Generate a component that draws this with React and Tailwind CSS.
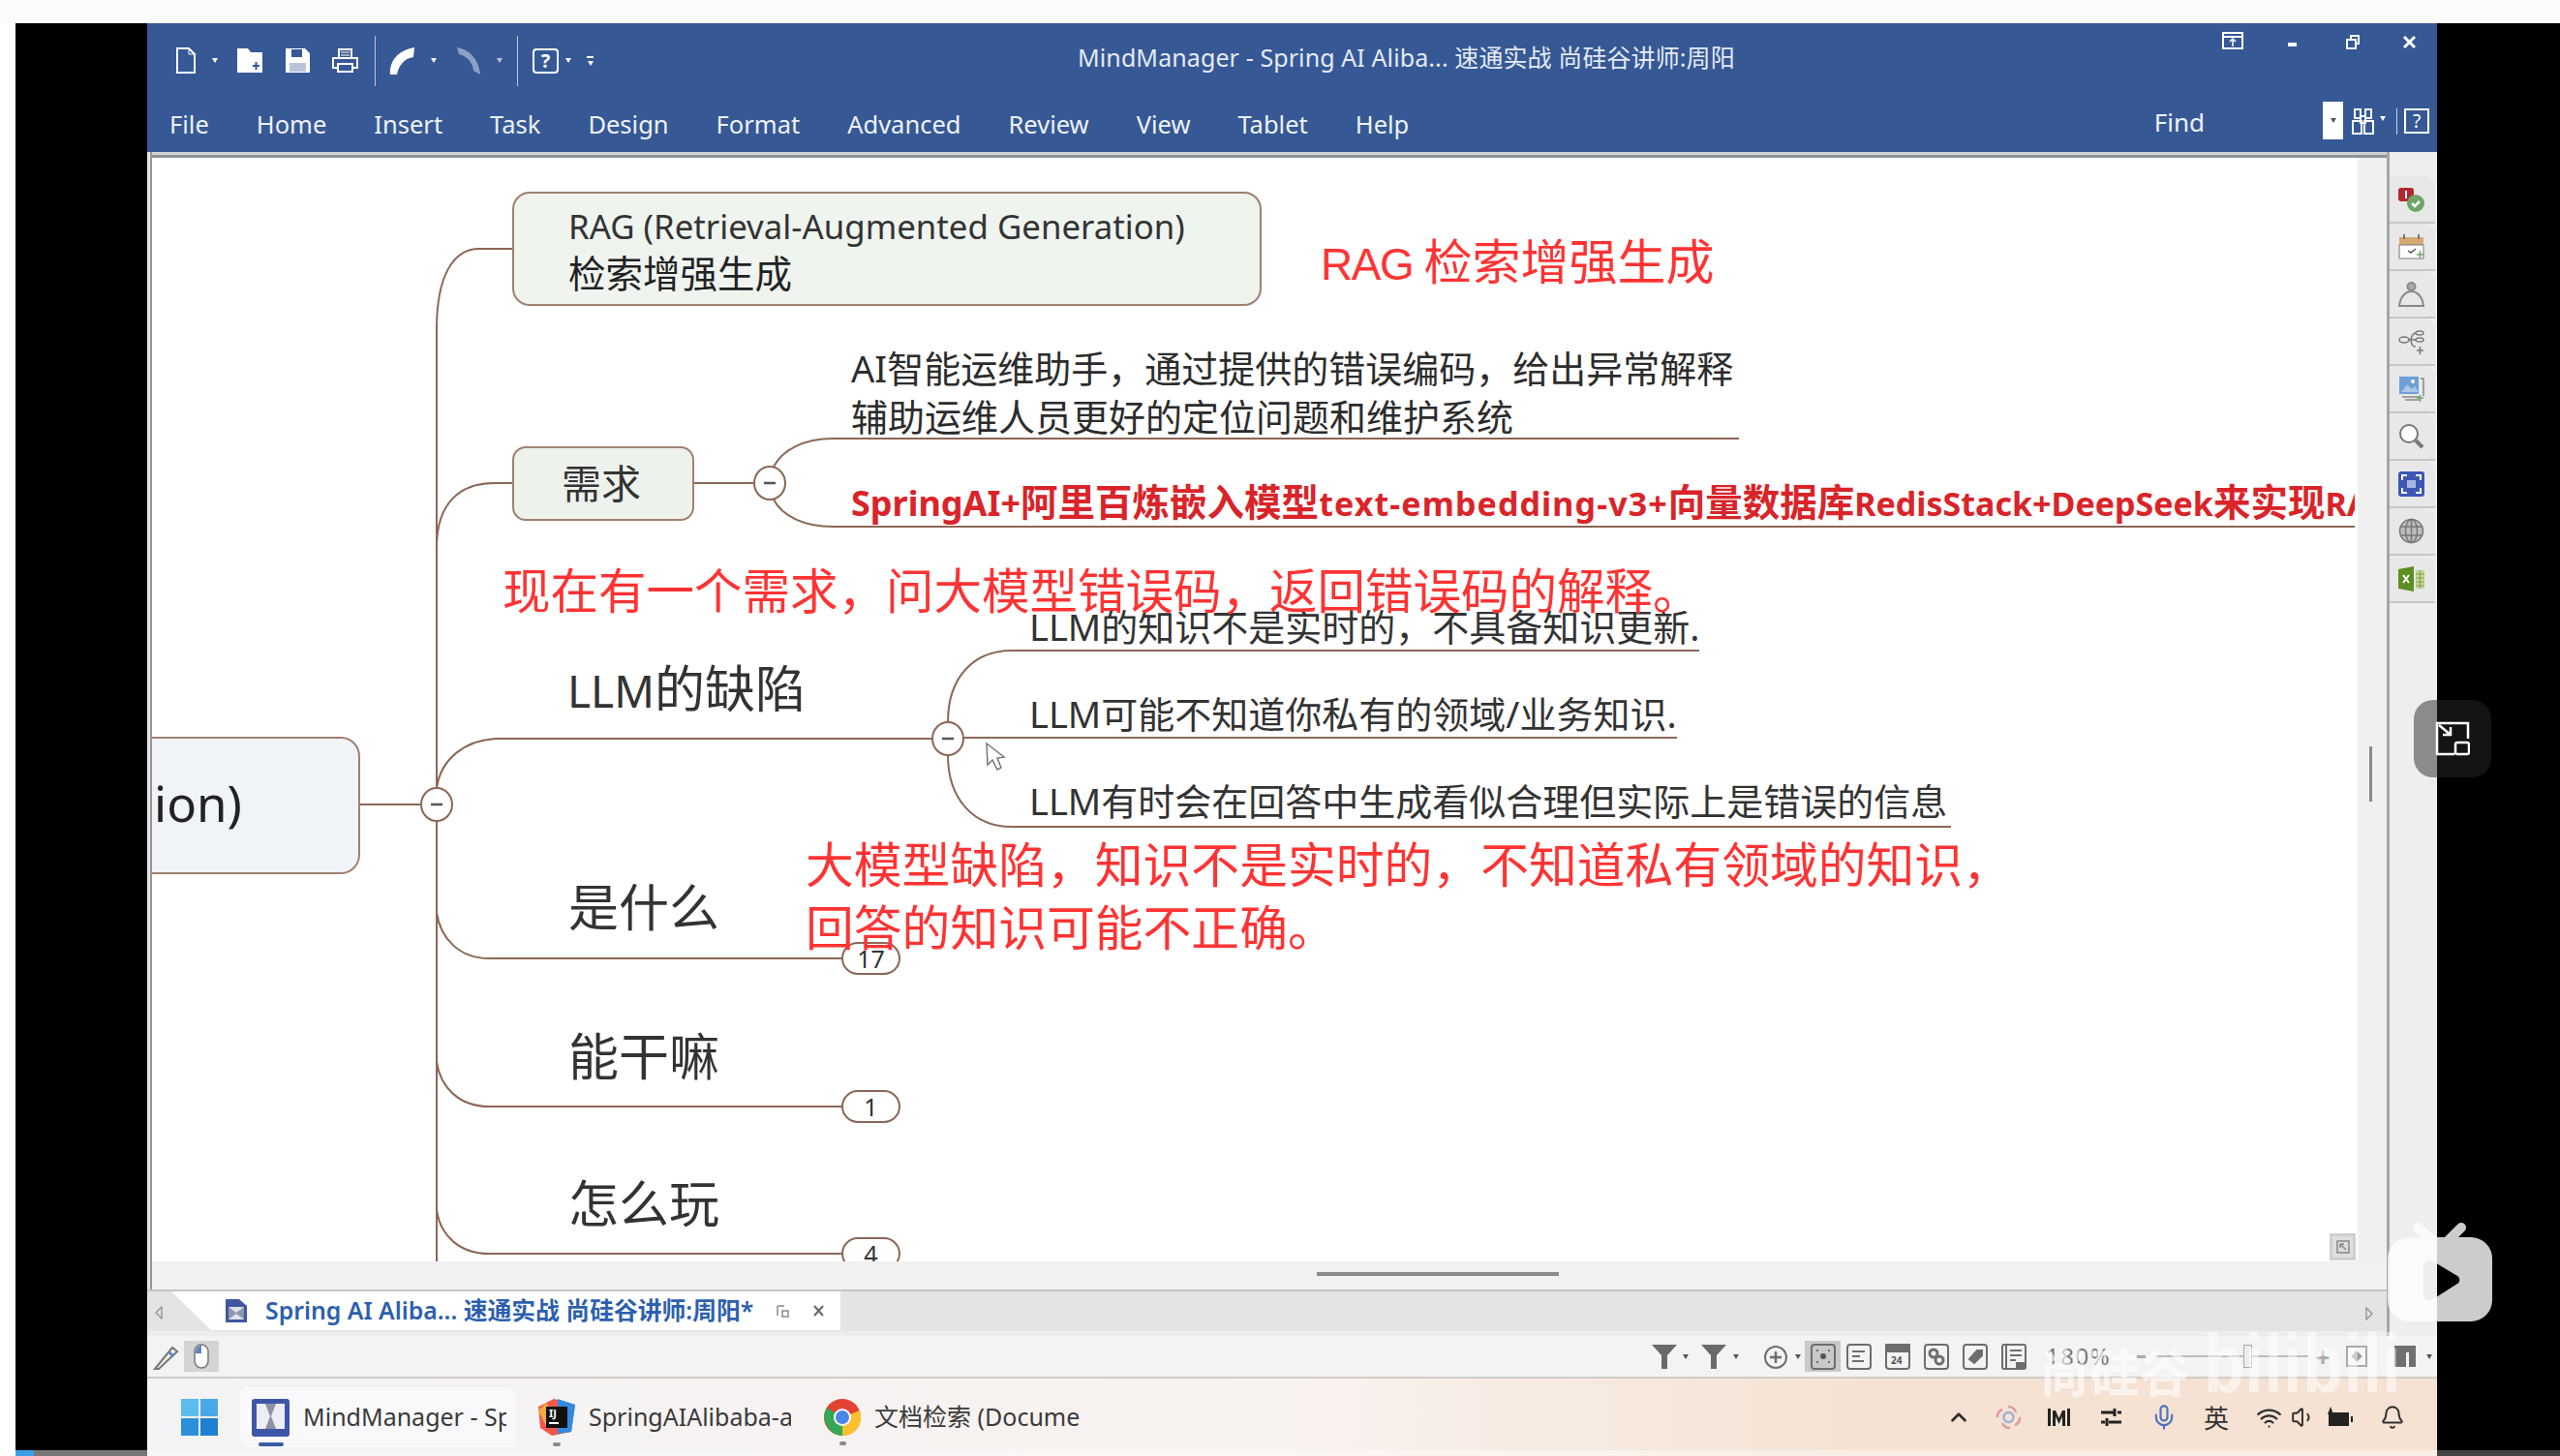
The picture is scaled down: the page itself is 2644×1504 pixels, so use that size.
import React from "react";
import { ChevronUp, Mic, Wifi, Bell, Volume1 } from "lucide-react";

const Caret = ({ className = "", color = "white" }) => (
  <svg className={"w-[6px] h-[5px] shrink-0 " + className} viewBox="0 0 6 5"><path d="M0 0h6L3 5z" fill={color} /></svg>
);

const Tab = ({ children }) => (
  <div className="w-[47px] h-[49px] bg-[#e8e8e8] border-b-2 border-[#c6c6c6] flex items-center justify-center pr-[2px] [clip-path:polygon(0_0,82%_0,100%_14%,100%_100%,0_100%)]">
    {children}
  </div>
);

const SIcon = ({ children, className = "" }) => (
  <svg className={"w-[26px] h-[27px] shrink-0 " + className} viewBox="0 0 26 27" fill="none" stroke="#6e6e6e" strokeWidth="2">{children}</svg>
);

function Title() {
  return (
    <div className="h-[66px] flex items-start relative">
      <div className="flex items-center pl-[29px] pt-[17px] h-[60px]">
        <svg className="w-[22px] h-[27px]" viewBox="0 0 22 27" fill="none" stroke="white" strokeWidth="2"><path d="M2 1h12l6 6v19H2z" /><path d="M14 1v6h6" strokeWidth="1" /></svg>
        <Caret className="ml-[16px]" />
        <svg className="w-[28px] h-[27px] ml-[19px]" viewBox="0 0 28 27"><path d="M1 1h11l3 4h12v21H1z" fill="white" /><path d="M17 19h7M20.500 15v8" stroke="#365895" strokeWidth="2" /></svg>
        <svg className="w-[27px] h-[27px] ml-[22px]" viewBox="0 0 27 27"><path d="M1 1h20l5 5v20H1z" fill="white" /><path d="M7 2h11v8H7z" fill="#365895" /><path d="M5 16h17v9H5z" fill="#365895" opacity=".35" /></svg>
        <svg className="w-[29px] h-[27px] ml-[21px]" viewBox="0 0 29 27" fill="none" stroke="white" strokeWidth="2"><path d="M8 10V2h13v8" /><path d="M2 11h25v10H2z" /><path d="M7 17h15v8H7z" fill="#365895" /><path d="M10 5h9M10 8h9" strokeWidth="1" /></svg>
        <div className="w-px h-[52px] bg-[#b8c5dc] ml-[16px]" />
        <svg className="w-[27px] h-[30px] ml-[14px]" viewBox="0 0 27 30"><path d="M1 29C0 15 9 4 26 1L25 11C16 12 10 19 8 29z" fill="white" /></svg>
        <Caret className="ml-[16px]" />
        <svg className="w-[26px] h-[30px] ml-[20px]" viewBox="0 0 26 30"><path d="M1 1C14 3 24 14 25 29L18 25C17 17 12 10 3 8z" fill="#8ca0c6" /></svg>
        <Caret className="ml-[16px]" color="#b8c5dc" />
        <div className="w-px h-[52px] bg-[#b8c5dc] ml-[15px]" />
        <div className="w-[27px] h-[26px] ml-[15px] rounded-[4px] border-2 border-white text-white text-[20px] leading-[22px] font-bold text-center">?</div>
        <Caret className="ml-[7px]" />
        <div className="ml-[16px] flex flex-col items-center gap-[3px]">
          <div className="w-[7px] h-[2px] bg-white" />
          <Caret />
        </div>
      </div>
      <div className="absolute left-[961px] top-0 h-[70px] leading-[70px] text-[25px] text-[#e4eaf4] whitespace-nowrap tracking-[0.1px]">
        MindManager - Spring AI Aliba... 速通实战 尚硅谷讲师:周阳
      </div>
      <div className="ml-auto flex items-start">
        <svg className="w-[22px] h-[18px] mt-[9px]" viewBox="0 0 22 18" fill="none" stroke="white" strokeWidth="2"><path d="M1 1h20v16H1zM1 5h20" /><path d="M11 15V8M8 10l3-3 3 3" strokeWidth="1.500" /></svg>
        <div className="w-[9px] h-[4px] bg-white mt-[20px] ml-[46px]" />
        <svg className="w-[14px] h-[15px] mt-[12px] ml-[51px]" viewBox="0 0 14 15" fill="none" stroke="white" strokeWidth="2"><path d="M5 4V1h8v8h-3" /><path d="M1 5h9v9H1z" /></svg>
        <svg className="w-[13px] h-[13px] mt-[13px] ml-[45px] mr-[22px]" viewBox="0 0 13 13" stroke="white" strokeWidth="3"><path d="M1 1l11 11M12 1L1 12" /></svg>
      </div>
    </div>
  );
}

function Menu() {
  return (
    <div className="h-[67px] flex items-start text-white">
      <div className="flex gap-[49px] pl-[23px] pt-[19px] text-[25.500px] leading-[38px] text-[#eef2f8]">
        <span>File</span><span>Home</span><span>Insert</span><span>Task</span><span>Design</span><span>Format</span><span>Advanced</span><span>Review</span><span>View</span><span>Tablet</span><span>Help</span>
      </div>
      <div className="ml-auto flex items-start">
        <span className="text-[26px] leading-[38px] mt-[17px] text-[#eef2f8]">Find</span>
        <div className="w-[21px] h-[39px] bg-white mt-[15px] ml-[122px] flex items-center justify-center"><Caret color="#555" /></div>
        <svg className="w-[27px] h-[27px] mt-[22px] ml-[7px]" viewBox="0 0 27 27" fill="none" stroke="white" strokeWidth="2"><path d="M5 1h6v9H5zM16 1h6v9h-6zM3 13h9v13H3zM15 13h9v13h-9zM11 8h5v7h-5z" /></svg>
        <Caret className="mt-[30px] ml-[4px]" />
        <div className="w-px h-[27px] bg-[#c8d3e6] mt-[22px] ml-[11px]" />
        <div className="w-[26px] h-[26px] border-2 border-white mt-[22px] ml-[7px] mr-[8px] text-center text-[19px] leading-[22px] text-white">?</div>
      </div>
    </div>
  );
}

function MindMap() {
  return (
    <div className="relative flex-1 bg-white overflow-hidden">
      <svg className="absolute left-0 top-0 w-[2278px] h-[1140px]" viewBox="157 163 2278 1140" fill="none" stroke="#8c6656" strokeWidth="2">
        <path d="M529 257H495C468 257 451 285 451 340V1303" />
        <path d="M529 499H510C475 499 451 520 451 565" />
        <path d="M371 831H434" />
        <path d="M451 814C455 785 480 763 515 763H962" />
        <path d="M451 943C455 970 475 990 505 990H869" />
        <path d="M451 1097C455 1124 475 1143 505 1143H869" />
        <path d="M451 1250C455 1277 475 1295 505 1295H869" />
        <path d="M717 499H778" />
        <path d="M799 482C808 465 830 453 860 453H1796" />
        <path d="M799 516C808 533 830 544 860 544H2432" />
        <path d="M979 746C979 700 1005 672 1045 672H1755" />
        <path d="M996 762H1732" />
        <path d="M979 780C979 825 1005 854 1045 854H2015" />
        <ellipse cx="451" cy="831" rx="16" ry="17" fill="white" />
        <ellipse cx="795" cy="499" rx="16" ry="17" fill="white" />
        <ellipse cx="979" cy="763" rx="16" ry="17" fill="white" />
        <path d="M445 831H457M789 499H801M973 763H985" stroke="#555" strokeWidth="2.500" />
        <path d="M1019 768L1020 790L1025 785L1030 795L1034 793L1030 783L1037 782Z" fill="white" stroke="#777" strokeWidth="1.500" />
      </svg>

      <div className="absolute left-[372px] top-[35px] w-[774px] h-[118px] bg-[#eff4ef] border-2 border-[#a08070] rounded-[18px] pl-[56px] pt-[10px] text-[34.800px] leading-[48px] text-[#333]">
        <div className="whitespace-nowrap">RAG (Retrieval-Augmented Generation)</div>
        <div className="text-[38.500px] text-[#222]">检索增强生成</div>
      </div>

      <div className="absolute left-[372px] top-[298px] w-[188px] h-[77px] bg-[#edf3ec] border-2 border-[#a08070] rounded-[14px] flex items-center justify-center text-[41px] text-[#333] pr-[4px]">需求</div>

      <div className="absolute left-0 top-[598px] w-[215px] h-[142px] bg-[#f0f3f8] border-2 border-l-0 border-[#a08070] rounded-r-[20px] flex items-center pl-[2px] pb-[5px] text-[51px] text-[#222]">ion)</div>

      <div className="absolute left-[722px] top-[192px] text-[38px] leading-[50px] text-[#2c2c2c] whitespace-nowrap">
        <div>AI智能运维助手，通过提供的错误编码，给出异常解释</div>
        <div>辅助运维人员更好的定位问题和维护系统</div>
      </div>
      <div className="absolute left-[722px] top-[330px] w-[1553px] overflow-hidden text-[34px] leading-[50px] font-bold text-[#d92429] whitespace-nowrap">
        <span className="text-[36px]">SpringAI+</span><span className="text-[38.500px]">阿里百炼嵌入模型</span><span className="tracking-[1.100px]">text-embedding-v3+</span><span className="text-[38.500px]">向量数据库</span>RedisStack+DeepSeek<span className="text-[38.500px]">来实现</span>RAG
      </div>

      <div className="absolute left-[429px] top-[518px] text-[52px] leading-[60px] text-[#333] whitespace-nowrap"><span className="text-[46px]">LLM</span>的缺陷</div>
      <div className="absolute left-[906px] top-[459px] text-[38px] leading-[50px] text-[#333] whitespace-nowrap">LLM的知识不是实时的，不具备知识更新.</div>
      <div className="absolute left-[906px] top-[549px] text-[38px] leading-[50px] text-[#333] whitespace-nowrap">LLM可能不知道你私有的领域/业务知识.</div>
      <div className="absolute left-[906px] top-[639px] text-[38px] leading-[50px] text-[#333] whitespace-nowrap">LLM有时会在回答中生成看似合理但实际上是错误的信息</div>

      <div className="absolute left-[430px] top-[744px] text-[52px] leading-[60px] text-[#333]">是什么</div>
      <div className="absolute left-[430px] top-[898px] text-[52px] leading-[60px] text-[#333]">能干嘛</div>
      <div className="absolute left-[430px] top-[1050px] text-[52px] leading-[60px] text-[#333]">怎么玩</div>

      <div className="absolute left-[712px] top-[810px] w-[61px] h-[34px] bg-white border-2 border-[#8c6656] rounded-full text-center text-[25px] leading-[30px] text-[#333]">17</div>
      <div className="absolute left-[712px] top-[963px] w-[61px] h-[34px] bg-white border-2 border-[#8c6656] rounded-full text-center text-[25px] leading-[30px] text-[#333]">1</div>
      <div className="absolute left-[712px] top-[1115px] w-[61px] h-[34px] bg-white border-2 border-[#8c6656] rounded-full text-center text-[25px] leading-[30px] text-[#333]">4</div>

      <div className="absolute left-[1207px] top-[79px] font-['Liberation_Sans','Noto_Sans_CJK_SC',sans-serif] text-[50px] leading-[60px] text-[#ff3333] whitespace-nowrap"><span className="text-[46px] tracking-[-1.500px]">RAG </span>检索增强生成</div>
      <div className="absolute left-[362px] top-[419px] font-['Liberation_Sans','Noto_Sans_CJK_SC',sans-serif] text-[49.500px] leading-[60px] text-[#ff3333] whitespace-nowrap">现在有一个需求，问大模型错误码，返回错误码的解释。</div>
      <div className="absolute left-[675px] top-[700px] font-['Liberation_Sans','Noto_Sans_CJK_SC',sans-serif] text-[49.800px] leading-[65px] text-[#ff3333] whitespace-nowrap">
        <div>大模型缺陷，知识不是实时的，不知道私有领域的知识，</div>
        <div>回答的知识可能不正确。</div>
      </div>

      <div className="absolute left-[2249px] top-[1111px] w-[27px] h-[28px] bg-[#dedede] border-[3px] border-[#cfcfcf] flex items-center justify-center">
        <svg className="w-[14px] h-[14px]" viewBox="0 0 14 14" fill="none" stroke="#888" strokeWidth="1.500"><path d="M1 1h12v12H1zM4 4l6 6M4 4h4M4 4v4" /></svg>
      </div>
    </div>
  );
}

function RightPanel() {
  return (
    <div className="w-[52px] shrink-0 bg-[#eeeeee] border-l-[3px] border-[#a6a6a6] pt-[25px] flex flex-col">
      <Tab>
        <svg className="w-[27px] h-[26px]" viewBox="0 0 27 26"><rect x="0" y="1" width="16" height="14" rx="3" fill="#b3282d" /><path d="M7 4h2v8H7z" fill="white" /><circle cx="18" cy="17" r="9" fill="#6fa566" /><path d="M14 17l3 3 5-5" stroke="white" strokeWidth="2.500" fill="none" /></svg>
      </Tab>
      <Tab>
        <svg className="w-[27px] h-[27px]" viewBox="0 0 27 27"><path d="M1 4h25v8H1z" fill="#d7a873" /><path d="M1 12h25v14H1z" fill="white" stroke="#777" /><path d="M6 1v5M21 1v5" stroke="#777" strokeWidth="2" /><path d="M10 18l3 2 5-4" stroke="#555" strokeWidth="1.500" fill="none" /><path d="M19 22h7M22.500 18v8" stroke="#6fa566" strokeWidth="1.500" /></svg>
      </Tab>
      <Tab>
        <svg className="w-[27px] h-[27px]" viewBox="0 0 27 27" fill="none" stroke="#888" strokeWidth="2"><circle cx="13.500" cy="6" r="4" fill="#aaa" /><path d="M1 26C2 16 8 11 13.500 11S25 16 26 26z" /></svg>
      </Tab>
      <Tab>
        <svg className="w-[27px] h-[27px]" viewBox="0 0 27 27" fill="none" stroke="#777" strokeWidth="1.500"><ellipse cx="6" cy="12" rx="5" ry="3" /><path d="M11 12h4M13 12C14 7 15 5 18 5M14 12h4M13 13C14 18 15 19 18 19" /><ellipse cx="22" cy="5" rx="4" ry="2" /><ellipse cx="22" cy="12" rx="4" ry="2" /><path d="M19 23h7M22.500 19v8" /></svg>
      </Tab>
      <Tab>
        <svg className="w-[27px] h-[27px]" viewBox="0 0 27 27"><path d="M1 1h20v18H1z" fill="#6e9fd6" /><path d="M3 17l6-8 5 5 3-3 4 6z" fill="#a9c7e6" /><circle cx="15" cy="6" r="2" fill="white" /><path d="M23 3h3v18M4 22h19M7 25h15" stroke="#888" strokeWidth="1.500" fill="none" /><path d="M19 23h7M22.500 20v7" stroke="#6fa566" strokeWidth="1.500" /></svg>
      </Tab>
      <Tab>
        <svg className="w-[27px] h-[27px]" viewBox="0 0 27 27" fill="none" stroke="#777"><circle cx="11" cy="11" r="9" fill="white" strokeWidth="2" /><path d="M18 18l7 7" strokeWidth="4" /></svg>
      </Tab>
      <Tab>
        <svg className="w-[27px] h-[26px]" viewBox="0 0 27 26"><rect width="27" height="26" rx="3" fill="#3f56b5" /><path d="M4 9V4h5M18 4h5v5M23 17v5h-5M9 22H4v-5" stroke="white" strokeWidth="2" fill="none" /><path d="M9 9h9v8H9z" fill="#a8b6e4" /></svg>
      </Tab>
      <Tab>
        <svg className="w-[27px] h-[27px]" viewBox="0 0 27 27" fill="#bdbdbd" stroke="#777" strokeWidth="1.500"><circle cx="13.500" cy="13.500" r="12" /><ellipse cx="13.500" cy="13.500" rx="6" ry="12" fill="none" /><path d="M13.500 1v25M2 9h23M2 18h23" fill="none" /></svg>
      </Tab>
      <Tab>
        <svg className="w-[27px] h-[26px]" viewBox="0 0 27 26"><path d="M0 3l16-3v26L0 23z" fill="#5c8e22" /><path d="M5 9l6 8M11 9l-6 8" stroke="white" strokeWidth="2" /><path d="M18 4h9v19h-9z" fill="#c6d69c" /><path d="M18 8h9M18 12h9M18 16h9M18 20h9M22.500 4v19" stroke="#7fa23d" strokeWidth="1" /></svg>
      </Tab>
    </div>
  );
}

function TabBar() {
  return (
    <div className="h-[48px] bg-[#e4e4e4] border-t-2 border-b-[5px] border-t-[#c4c4c4] border-b-[#ececec] flex items-start relative shrink-0">
      <svg className="w-[8px] h-[14px] ml-[8px] mt-[15px]" viewBox="0 0 8 14" fill="none" stroke="#999" strokeWidth="1.500"><path d="M7 1L1 7l6 6z" /></svg>
      <div className="ml-[9px] w-[691px] h-[40px] bg-white [clip-path:polygon(0_0,100%_0,100%_100%,41px_100%)] flex items-center pl-[55px]">
        <svg className="w-[24px] h-[26px] shrink-0" viewBox="0 0 24 26"><path d="M1 1h14l8 7v17H1z" fill="#3f56a0" /><path d="M4 9h16v13H4z" fill="#dfe3ec" /><path d="M4 9l8 6 8-6v13l-8-6-8 6z" fill="#8e97ad" /></svg>
        <span className="ml-[18px] text-[24.800px] font-semibold text-[#2d5fae] whitespace-nowrap">Spring AI Aliba... 速通实战 尚硅谷讲师:周阳*</span>
        <svg className="w-[13px] h-[13px] ml-[24px] shrink-0" viewBox="0 0 13 13" fill="none" stroke="#888" strokeWidth="1.500"><path d="M1 1h7M1 1v10M6 6h6v6H6z" /></svg>
        <svg className="w-[11px] h-[12px] ml-[25px] shrink-0" viewBox="0 0 11 12" stroke="#666" strokeWidth="2"><path d="M1 1l9 10M10 1L1 11" /></svg>
      </div>
      <svg className="absolute right-[14px] top-[16px] w-[8px] h-[14px]" viewBox="0 0 8 14" fill="none" stroke="#999" strokeWidth="1.500"><path d="M1 1l6 6-6 6z" /></svg>
    </div>
  );
}

function StatusBar() {
  return (
    <div className="h-[44px] bg-[#f3f3f3] border-b-2 border-[#d0ccc8] flex items-center shrink-0">
      <svg className="w-[28px] h-[30px] ml-[6px]" viewBox="0 0 28 30" fill="none" stroke="#777" strokeWidth="2"><path d="M2 28L20 6l5 4L6 28z" /><path d="M16 10l5 5" stroke="#5f84c0" strokeWidth="3" /></svg>
      <div className="w-[36px] h-[32px] bg-[#d4d4d4] ml-[4px] flex items-center justify-center">
        <svg className="w-[16px] h-[26px]" viewBox="0 0 16 26"><rect x="1" y="1" width="14" height="24" rx="7" fill="white" stroke="#777" strokeWidth="1.500" /><path d="M2 8a6 6 0 0 1 6-6v8H2z" fill="#5f84c0" /></svg>
      </div>
      <div className="ml-auto flex items-center">
        <svg className="w-[26px] h-[25px]" viewBox="0 0 26 25"><path d="M0 0h26L16 11v14h-6V11z" fill="#6a6a6a" /></svg>
        <Caret className="ml-[6px]" color="#555" />
        <svg className="w-[26px] h-[25px] ml-[13px]" viewBox="0 0 26 25"><path d="M0 0h26L16 11v14h-6V11z" fill="#6a6a6a" /><path d="M22 8l-6 8h4l-3 8 7-10h-4z" fill="#f3f3f3" /></svg>
        <Caret className="ml-[7px]" color="#555" />
        <SIcon className="ml-[25px]"><circle cx="13" cy="14" r="11" /><path d="M13 8v12M7 14h12" strokeWidth="2.500" /></SIcon>
        <Caret className="ml-[7px]" color="#555" />
        <div className="w-[37px] h-[32px] bg-[#c9c9c9] ml-[4px] flex items-center justify-center">
          <SIcon><rect x="1" y="1" width="24" height="25" rx="3" /><circle cx="13" cy="13" r="3" fill="#555" stroke="none" /><path d="M6 7h2M18 7h2M6 19h2M18 19h2" /></SIcon>
        </div>
        <SIcon className="ml-[6px]"><rect x="1" y="1" width="24" height="25" rx="3" /><path d="M6 8h13M6 13h8M6 18h12" /></SIcon>
        <SIcon className="ml-[14px]"><rect x="1" y="1" width="24" height="25" rx="3" /><path d="M1 1h24v7H1z" fill="#6e6e6e" /><text x="6" y="21" fontSize="10" fill="#555" stroke="none" fontWeight="700">24</text></SIcon>
        <SIcon className="ml-[14px]"><rect x="1" y="1" width="24" height="25" rx="3" /><circle cx="10" cy="10" r="4" strokeWidth="3" /><circle cx="16" cy="17" r="4" strokeWidth="3" /></SIcon>
        <SIcon className="ml-[14px]"><rect x="1" y="1" width="24" height="25" rx="3" /><path d="M7 16l8-9 5 0 0 5-8 8z" fill="#6e6e6e" /></SIcon>
        <SIcon className="ml-[14px]"><rect x="1" y="1" width="24" height="25" rx="2" /><path d="M5 1v25M9 7h12M9 12h12M9 17h6" /><path d="M16 20h8v5h-8z" fill="#6e6e6e" /></SIcon>
        <span className="ml-[20px] text-[24px] text-[#777] w-[64px] tracking-[1.500px]">180%</span>
        <div className="ml-[30px] w-[9px] h-[3px] bg-[#aaa]" />
        <div className="relative ml-[10px] w-[158px] h-[2px] bg-[#bbb] flex items-center">
          <div className="absolute left-[91px] w-[9px] h-[24px] bg-[#eee] border border-[#aaa]" />
        </div>
        <div className="ml-[7px] text-[28px] leading-[28px] text-[#aaa] font-bold w-[20px]">+</div>
        <div className="ml-[12px] w-[22px] h-[22px] border-2 border-[#aaa] bg-[#f6f6f6] flex items-center justify-center">
          <div className="w-[8px] h-[8px] bg-[#999] rotate-45" />
        </div>
        <svg className="w-[22px] h-[22px] ml-[28px]" viewBox="0 0 22 22"><path d="M0 0h22v22H15V7h-3v15H0z" fill="#707070" /></svg>
        <Caret className="ml-[11px] mr-[5px]" color="#555" />
      </div>
    </div>
  );
}

function Taskbar() {
  return (
    <div className="h-[80px] shrink-0 bg-gradient-to-r from-[#f4f3f5] via-[#f8f2ef] via-50% to-[#f5e2d2] to-75% flex items-center relative font-['Noto_Sans','Noto_Sans_CJK_SC',sans-serif]">
      <svg className="w-[38px] h-[38px] ml-[35px]" viewBox="0 0 38 38"><path d="M0 0h18v18H0z" fill="#5cbcf0" /><path d="M20 0h18v18H20z" fill="#4aa8e8" /><path d="M0 20h18v18H0z" fill="#2b8fdc" /><path d="M20 20h18v18H20z" fill="#1f7fd0" /></svg>
      <div className="ml-[23px] w-[285px] h-[62px] bg-[#f9f9fb] rounded-[8px] flex items-center relative">
        <svg className="w-[39px] h-[39px] ml-[12px]" viewBox="0 0 39 39"><rect width="39" height="39" rx="3" fill="#3f56a8" /><path d="M5 5h29v26H5z" fill="#eceef3" /><path d="M14 5h11l-5 13 5 13H14l5-13z" fill="#8d93a5" /></svg>
        <span className="ml-[14px] w-[210px] overflow-hidden whitespace-nowrap text-[25px] text-[#3a3a3a]">MindManager - Spring</span>
        <div className="absolute left-[19px] bottom-[1px] w-[26px] h-[4px] rounded-full bg-[#3b5ba5]" />
      </div>
      <div className="ml-[23px] relative">
        <svg className="w-[38px] h-[38px]" viewBox="0 0 38 38"><path d="M0 8L16 0l22 6-4 28-20 4L2 30z" fill="#f2574a" /><path d="M20 0l18 6-4 28-14 2z" fill="#2f8be0" /><path d="M0 12l8-8 8 10-8 14z" fill="#f3a83a" /><path d="M8 8h22v22H8z" fill="#111" /></svg>
        <span className="absolute left-[11px] top-[9px] text-[11px] leading-[12px] font-bold text-white">IJ</span>
        <div className="absolute left-[11px] top-[24px] w-[10px] h-[2px] bg-white" />
        <div className="absolute left-[15px] top-[45px] w-[8px] h-[4px] rounded-full bg-[#888]" />
      </div>
      <span className="ml-[14px] w-[209px] overflow-hidden whitespace-nowrap text-[25px] text-[#3a3a3a]">SpringAIAlibaba-ai</span>
      <div className="ml-[34px] relative">
        <svg className="w-[38px] h-[40px]" viewBox="0 0 38 38"><circle cx="19" cy="19" r="19" fill="#e34133" /><path d="M19 19L3 28A19 19 0 0 0 19 38z" fill="#35a853" /><path d="M19 19v19A19 19 0 0 0 37 12z" fill="#fbc02d" /><path d="M19 19L3 28A19 19 0 0 1 3 9z" fill="#35a853" /><circle cx="19" cy="19" r="9" fill="white" /><circle cx="19" cy="19" r="7" fill="#4a86e8" /></svg>
        <div className="absolute left-[16px] top-[45px] w-[7px] h-[4px] rounded-full bg-[#888]" />
      </div>
      <span className="ml-[14px] text-[25px] text-[#3a3a3a] whitespace-nowrap w-[212px] overflow-hidden">文档检索 (Docume</span>
      <div className="ml-auto flex items-center text-[#2f2f2f]">
        <ChevronUp className="w-[26px] h-[26px]" strokeWidth={2.500} />
        <svg className="w-[27px] h-[26px] ml-[25px]" viewBox="0 0 27 26" fill="none" stroke="#e29aa4" strokeWidth="2.500"><circle cx="13.500" cy="13" r="5" stroke="#9fb1d8" /><path d="M13 2a8 8 0 0 1 8 6M25 13a8 8 0 0 1-5 8M15 24a8 8 0 0 1-8-5M2 13a8 8 0 0 1 5-8" /></svg>
        <svg className="w-[23px] h-[18px] ml-[27px]" viewBox="0 0 23 18"><path d="M0 0h3v18H0zM20 0h3v18h-3zM5 2h3l3.500 8L15 2h3v16h-3V8l-3.500 8L8 8v10H5z" fill="#222" /></svg>
        <svg className="w-[21px] h-[20px] ml-[32px]" viewBox="0 0 21 20" fill="none" stroke="#222" strokeWidth="3"><path d="M0 5h13M17 5h4M0 15h4M8 15h13" /><path d="M14 1v8M6 11v8" strokeWidth="3" /></svg>
        <Mic className="w-[28px] h-[28px] ml-[30px] text-[#4e6fc0]" strokeWidth={1.800} />
        <span className="ml-[27px] text-[26px] leading-[30px] text-[#333] font-['Noto_Sans_CJK_SC',sans-serif]">英</span>
        <Wifi className="w-[27px] h-[27px] ml-[28px]" strokeWidth={2} />
        <Volume1 className="w-[26px] h-[26px] ml-[9px]" strokeWidth={1.800} />
        <svg className="w-[27px] h-[22px] ml-[11px]" viewBox="0 0 27 22"><path d="M2 6h21v14H2z" fill="#222" /><path d="M25 10h2v6h-2z" fill="#222" /><path d="M4 0l3 8H1z" fill="#222" /></svg>
        <Bell className="w-[26px] h-[26px] ml-[28px] mr-[33px]" strokeWidth={1.800} />
      </div>
    </div>
  );
}

export default function App() {
  return (
    <div className="w-[2644px] h-[1504px] flex flex-col bg-white overflow-hidden relative font-['Noto_Sans','Noto_Sans_CJK_SC',sans-serif]">
      <div className="h-[24px] bg-[#fbfbfb] shrink-0" />
      <div className="flex-1 flex min-h-0">
        <div className="w-[16px] bg-white shrink-0" />
        <div className="w-[136px] bg-black shrink-0" />
        <div className="w-[2365px] shrink-0 flex flex-col">
          <div className="bg-[#365895] shrink-0">
            <Title />
            <Menu />
          </div>
          <div className="flex-1 flex min-h-0">
            <div className="flex-1 flex flex-col min-w-0">
              <div className="flex-1 flex min-h-0">
                <div className="w-[5px] bg-[#e6e6e6] border-r-2 border-[#969696] shrink-0" />
                <div className="flex-1 flex flex-col min-w-0">
                  <div className="h-[6px] bg-[#cfd2d4] border-b-[3px] border-[#8f9396] shrink-0" />
                  <div className="flex-1 flex min-h-0">
                    <MindMap />
                    <div className="w-[30px] bg-[#f0f0f0] shrink-0 pt-[608px] pl-[12px]">
                      <div className="w-[3px] h-[57px] bg-[#8a8a8a]" />
                    </div>
                  </div>
                  <div className="h-[29px] bg-[#f1f1f1] pt-[11px] pl-[1203px] shrink-0">
                    <div className="w-[250px] h-[4px] bg-[#8a8a8a]" />
                  </div>
                </div>
              </div>
              <TabBar />
            </div>
            <RightPanel />
          </div>
          <StatusBar />
          <Taskbar />
        </div>
        <div className="flex-1 bg-black" />
      </div>

      <div className="absolute left-[2106px] top-[1388px] text-[52px] leading-[60px] font-bold text-white/60 whitespace-nowrap">尚硅谷</div>
      <div className="absolute left-[2276px] top-[1368px] font-['Liberation_Sans',sans-serif] text-[68px] leading-[80px] font-bold tracking-[1px] text-white/50 whitespace-nowrap scale-y-[1.25]">bilibili</div>

      <div className="absolute left-[2493px] top-[723px] w-[80px] h-[80px] rounded-[20px] bg-[#272727]/50 flex items-center justify-center">
        <svg className="w-[36px] h-[36px]" viewBox="0 0 36 36" fill="none" stroke="white" strokeWidth="2.500"><path d="M2 14V2h32v16M2 14v20h18" /><rect x="21" y="22" width="14" height="12" rx="2" /><path d="M4 4l12 10M16 6v8H8" /></svg>
      </div>

      <svg className="absolute left-[2460px] top-[1258px] w-[120px] h-[112px]" viewBox="0 0 120 112">
        <defs>
          <mask id="tvHole">
            <rect width="120" height="112" fill="white" />
            <path d="M43 51C43 45 48 42 53 45L78 60C81 62 81 66 78 68L53 84C48 87 43 84 43 78Z" fill="black" />
          </mask>
        </defs>
        <g opacity=".8" mask="url(#tvHole)">
          <path d="M37 10L53 24M82 10L68 24" stroke="white" strokeWidth="10" strokeLinecap="round" />
          <rect x="6" y="20" width="108" height="87" rx="22" fill="white" />
        </g>
      </svg>

      <div className="absolute left-[16px] bottom-0 w-[136px] h-[6px] bg-[#777]"><div className="w-[19px] h-[6px] bg-[#3a9fe6]" /></div>
      <div className="absolute left-[152px] bottom-0 w-[2365px] h-[6px] bg-white/40" />
      <div className="absolute left-[2517px] right-0 bottom-0 h-[6px] bg-[#444]" />
    </div>
  );
}
